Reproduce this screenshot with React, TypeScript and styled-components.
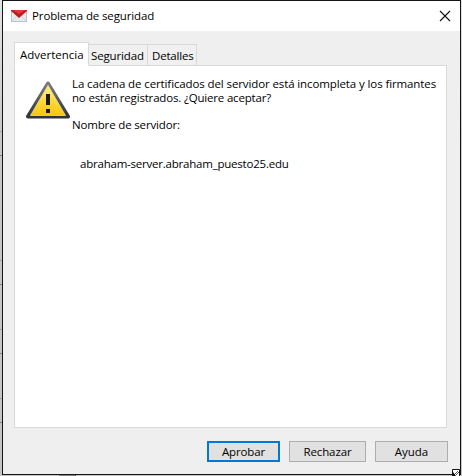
import React from "react";
import styled, { createGlobalStyle } from "styled-components";

const Global = createGlobalStyle`
  * { box-sizing: border-box; }
  html, body { margin: 0; padding: 0; overflow: hidden; background: #c4c4c4; }
  body { font: 11.5px/14px "Open Sans", "Noto Sans", sans-serif; color: #000; }
`;

const Desktop = styled.div`
  width: 462px;
  height: 476px;
  padding: 0 1px 1px 2px;
  position: relative;
  background: linear-gradient(#e3e3e3, #c6c6c6 30%, #c4c4c4);
  overflow: hidden;
`;

const EdgeMark = styled.i<{ $top: number; $dark?: boolean }>`
  position: absolute;
  left: 0;
  top: ${(p) => p.$top}px;
  width: 2px;
  height: 1px;
  background: ${(p) => (p.$dark ? "#808080" : "#a0a0a0")};
`;

const ScrollPiece = styled.i`
  position: absolute;
  left: 59px;
  bottom: 0;
  width: 17px;
  height: 1px;
  background: #858585;
  border-right: 1px solid #555;
`;

const Dialog = styled.main`
  height: 475px;
  display: flex;
  flex-direction: column;
  border: 1px solid #151515;
  background: #efefef;
`;

const TitleBar = styled.header`
  height: 30px;
  flex: none;
  display: flex;
  align-items: center;
  padding: 0 9px 0 8px;
  background: #fff;
`;

const Text = styled.span<{ $spacing?: number }>`
  display: block;
  white-space: nowrap;
  letter-spacing: ${(p) => p.$spacing ?? 0}px;
`;

const Title = styled(Text)`
  flex: 1;
  margin-left: 5px;
`;

const Close = styled.button`
  width: 12px;
  height: 12px;
  margin-bottom: 1px;
  padding: 0;
  border: 0;
  background: none;
  display: flex;
`;

const Body = styled.section`
  flex: 1;
  display: flex;
  flex-direction: column;
  padding: 11px 11px 12px;
`;

const Tabs = styled.nav`
  display: flex;
  align-items: flex-end;
  height: 24px;
  margin-bottom: -1px;
  z-index: 1;
`;

const Tab = styled.button<{ $active?: boolean; $width: number; $inset: number }>`
  width: ${(p) => p.$width}px;
  height: ${(p) => (p.$active ? 24 : 22)}px;
  padding: 2px 0 0 ${(p) => p.$inset}px;
  border: 1px solid #d9d9d9;
  border-left-width: ${(p) => (p.$active ? 1 : 0)}px;
  border-bottom-color: ${(p) => (p.$active ? "#fff" : "#d9d9d9")};
  background: ${(p) => (p.$active ? "#fff" : "#f0f0f0")};
  color: #000;
  font: inherit;
  text-align: left;
`;

const Panel = styled.div`
  width: 433px;
  height: 363px;
  flex: none;
  display: flex;
  padding: 11px 0 0 11px;
  border: 1px solid #d9d9d9;
  background: #fff;
`;

const Message = styled.div`
  margin-left: 2px;
`;

const ServerLabel = styled(Text)`
  margin-top: 13px;
`;

const ServerName = styled(Text)`
  margin: 25px 0 0 8px;
`;

const Actions = styled.footer`
  display: flex;
  gap: 9px;
  justify-content: flex-end;
  margin: 13px 1px 0 0;
`;

const Button = styled.button<{ $primary?: boolean; $width: number }>`
  width: ${(p) => p.$width}px;
  height: 21px;
  padding: 1px 0 0;
  display: flex;
  align-items: center;
  justify-content: center;
  border: ${(p) => (p.$primary ? "2px solid #0078d7" : "1px solid #adadad")};
  background: #e1e1e1;
  color: #000;
  font: inherit;
`;

const CornerBadge = styled.div`
  position: absolute;
  left: 452px;
  top: 469px;
  width: 8px;
  height: 7px;
  display: flex;
`;

const MailShape = styled.svg`
  flex: none;
  margin-bottom: 1px;
`;

const MailIcon = () => (
  <MailShape width="16" height="12" viewBox="0 0 16 12">
    <rect x=".5" y=".5" width="15" height="11" fill="#e6eaec" stroke="#bcc3c6" />
    <path d="M1 11 5.5 6.5M15 11l-4.500-4.500" stroke="#d0d5d7" />
    <path d="M0 0h16v1L8 8 0 1z" fill="#c4191f" />
    <path d="M1.500 0h13L8 4z" fill="#dc3a3e" />
  </MailShape>
);

const WarningShape = styled.svg`
  flex: none;
  margin-top: 4px;
`;

const WarningIcon = () => (
  <WarningShape width="44" height="38" viewBox="0 0 44 38">
    <defs>
      <linearGradient id="edge" x1="0" y1="0" x2="0" y2="1">
        <stop stopColor="#7d7d7d" />
        <stop offset="1" stopColor="#303538" />
      </linearGradient>
      <linearGradient id="fill" x1="0" y1="0" x2="0" y2="1">
        <stop stopColor="#fff08a" />
        <stop offset=".5" stopColor="#ffdc3d" />
        <stop offset="1" stopColor="#ffc20e" />
      </linearGradient>
    </defs>
    <path d="M22 2.500 42 35.500H2z" fill="url(#edge)" stroke="url(#edge)" strokeWidth="4" strokeLinejoin="round" />
    <path d="M22 4.500 39.500 34.500h-35z" fill="url(#fill)" stroke="#ffe99a" strokeWidth=".7" />
    <path d="M20 13h4v11h-4zM20 28h4v4h-4z" fill="#191a12" />
  </WarningShape>
);

const edgeMarks = [131, 155, 260, 284, 329, 353, 398, 422];

export default function App() {
  return (
    <>
      <Global />
      <Desktop>
        {edgeMarks.map((y, i) => (
          <EdgeMark key={y} $top={y} $dark={i % 2 === 1} />
        ))}
        <ScrollPiece />
        <Dialog>
          <TitleBar>
            <MailIcon />
            <Title $spacing={-0.12}>Problema de seguridad</Title>
            <Close aria-label="Cerrar">
              <svg width="12" height="12" viewBox="0 0 12 12">
                <path d="m1 1 10 10M11 1 1 11" stroke="#111" strokeWidth="1.1" />
              </svg>
            </Close>
          </TitleBar>
          <Body>
            <Tabs>
              <Tab $active $width={75} $inset={5}><Text>Advertencia</Text></Tab>
              <Tab $width={59} $inset={2}><Text $spacing={-0.15}>Seguridad</Text></Tab>
              <Tab $width={49} $inset={4}><Text $spacing={-0.2}>Detalles</Text></Tab>
            </Tabs>
            <Panel>
              <WarningIcon />
              <Message>
                <Text $spacing={-0.11}>La cadena de certificados del servidor está incompleta y los firmantes</Text>
                <Text $spacing={-0.18}>no están registrados. ¿Quiere aceptar?</Text>
                <ServerLabel $spacing={-0.16}>Nombre de servidor:</ServerLabel>
                <ServerName $spacing={-0.22}>abraham-server.abraham_puesto25.edu</ServerName>
              </Message>
            </Panel>
            <Actions>
              <Button $primary $width={73}><Text $spacing={-0.12}>Aprobar</Text></Button>
              <Button $width={77}><Text $spacing={-0.1}>Rechazar</Text></Button>
              <Button $width={73}><Text>Ayuda</Text></Button>
            </Actions>
          </Body>
        </Dialog>
        <CornerBadge>
          <svg width="8" height="7" viewBox="0 0 8 7">
            <path d="M.5 7V.5h7V7" fill="#fff" stroke="#111" />
            <path d="m2 6 4-4M4 6l3-3" fill="none" stroke="#333" strokeWidth=".8" />
            <path d="M1 3v4h3z" fill="#111" />
          </svg>
        </CornerBadge>
      </Desktop>
    </>
  );
}
